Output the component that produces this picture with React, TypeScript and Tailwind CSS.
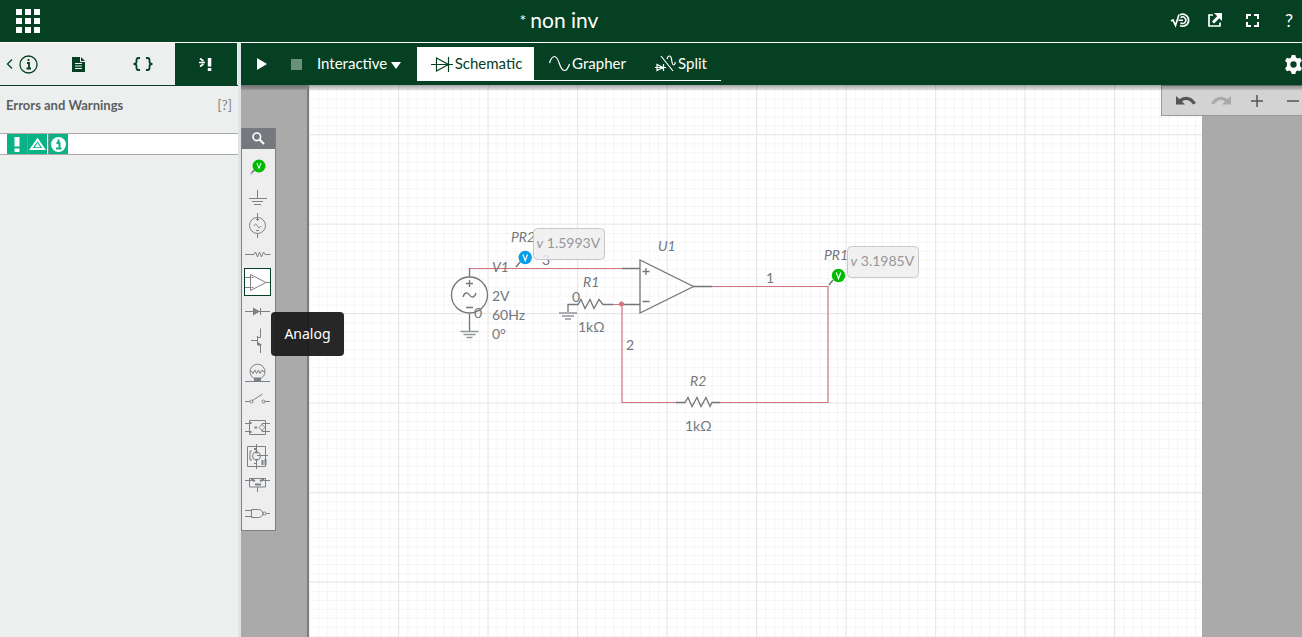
import React from "react";
import type { ReactNode } from "react";

const INK = "#73777c";
const WIRE = "#d4737f";

function Stroke({ children }: { children: ReactNode }) {
  return (
    <svg width="27" height="29" viewBox="0 0 27 29" fill="none" stroke="#7b8186">
      {children}
    </svg>
  );
}

const parts: { name: string; icon: ReactNode }[] = [
  {
    name: "Probes",
    icon: (
      <>
        <path d="M6 23 8 19l3-2 1 1z" fill="#7b8186" stroke="none" />
        <circle cx="15" cy="14" r="6.5" fill="#0b0" stroke="none" />
        <path d="M13 11l2 5.5 2-5.5" stroke="#fff" />
      </>
    ),
  },
  { name: "Schematic connectors", icon: <path d="M13.5 9v8M5 17.5h18M8 20.5h11M10 23.5h7" /> },
  {
    name: "Sources",
    icon: (
      <>
        <circle cx="13.5" cy="15.5" r="8" />
        <path d="M13.5 3v8M12 9.5h3M13.5 23.5V28M12 20.5h3M10 16c1-2.500 2.500-2.500 3.500 0s2.500 2 3.500 0" />
      </>
    ),
  },
  { name: "Passive", icon: <path d="M1 15.5h9l1.500-2.500 2 5 2-5 2 5 2-5 1.500 2.500h5.500" /> },
  { name: "Analog", icon: <path d="M6.500 6.500v16l15.500-8zM0 9.500h6.500M0 19.500h6.500M22 14.500h4M7.500 9.500h2M7.500 19.500h2" /> },
  {
    name: "Diodes",
    icon: (
      <>
        <path d="M1 14.500h25M16.500 11v7" />
        <path d="M9 10.500v8l7-4z" fill="#7b8186" stroke="none" />
      </>
    ),
  },
  {
    name: "Transistors",
    icon: (
      <>
        <path d="M7 14.500h6M13.500 10v9M13.500 11.500h3v-9M13.500 17.500l3 1.500v8" />
        <path d="M14 16l4 3-4 1z" fill="#7b8186" stroke="none" />
      </>
    ),
  },
  {
    name: "Indicators",
    icon: (
      <>
        <path d="M1 26.500h25M9.500 23a7.500 7.500 0 1 1 8 0zM6 16.500h2l1 2 2-3.500 1.500 3.500 2-3.500 1.500 3.500 2-3.500 1 1.500h2" />
        <path d="M10 23h7v3h-7z" fill="#7b8186" stroke="none" />
      </>
    ),
  },
  {
    name: "Switches",
    icon: (
      <>
        <circle cx="7.500" cy="17.500" r="1.500" />
        <circle cx="19.500" cy="17.500" r="1.500" />
        <path d="M1 17.500h5M21 17.500h5M8.500 16.500l10-6.500" />
      </>
    ),
  },
  {
    name: "Modeling blocks",
    icon: (
      <>
        <path d="M5.500 7.500h16v14h-16zM1 10.500h6M1 18.500h6M26 10.500h-8v1.500M26 18.500h-8v-1.500M18 11.500l3 3-3 3-3-3z" />
        <path d="M10.500 14.500h2.500M6.500 9v2M6.500 18v2" strokeWidth="2" />
      </>
    ),
  },
  {
    name: "Electromechanical",
    icon: (
      <>
        <path d="M3.500 4.500h18v20h-18zM12.500 2v8M12.500 18v9M13 13.500h11M8 9H6v9h2" />
        <circle cx="12.500" cy="14" r="4" />
        <path d="M11 6v2M11 21v1M18.500 18v5M21.500 17v6M12.500 8.500v3M12.500 17v2" strokeWidth="2" />
      </>
    ),
  },
  {
    name: "Connectors",
    icon: (
      <>
        <path d="M5.500 7.500h16v8.500h-16zM1 9.500h6M20 9.500h6M13.500 16v5" />
        <path d="M7 8.500l4 1.500M16 10l4-1.500M11 13.500h6" strokeWidth="2" />
      </>
    ),
  },
  {
    name: "Digital",
    icon: (
      <>
        <path d="M7.500 9.500h7a4.500 4 0 0 1 0 8h-7zM1 10.500h6.500M1 16.500h6.500M22 13.500h4" />
        <circle cx="20.500" cy="13.500" r="1.500" />
      </>
    ),
  },
];

function Header() {
  return (
    <header className="flex h-[43px] shrink-0 items-center border-b border-white bg-[#054023] text-white">
      <button aria-label="Apps" className="ml-4 w-6">
        <svg width="24" height="24" viewBox="0 0 24 24" fill="#fff">
          {[0, 9, 18].map((y) => [0, 9, 18].map((x) => <rect key={`${x}-${y}`} x={x} y={y} width="6" height="6" />))}
        </svg>
      </button>
      <h1 className="flex flex-1 justify-center gap-1 pb-0.5 pr-[92px] text-[21px] leading-6">
        <span className="text-base leading-6">*</span>non inv
      </h1>
      <nav className="flex items-center pb-0.5">
        <button aria-label="Multisim Live" className="mr-4">
          <svg width="22" height="18" viewBox="0 0 22 18" fill="none" stroke="#fff" strokeWidth="1.700">
            <path d="M1 10l2-1 2.500 5.500L9 3.500M10 3.800a6 6 0 1 1 0 10.800" />
            <path d="M10.500 6.800a3.200 3.200 0 1 1 0 4.800M8.500 9.200h4.500" strokeWidth="1.500" />
          </svg>
        </button>
        <button aria-label="Open in new window" className="mr-6">
          <svg width="14" height="14" viewBox="0 0 14 14" fill="none" stroke="#fff" strokeWidth="1.700">
            <path d="M5 2H1v11h11V9.500" />
            <path d="M5 9.500l6-6" strokeWidth="3" />
            <path d="M6 0h8v8z" fill="#fff" stroke="none" />
          </svg>
        </button>
        <button aria-label="Full screen" className="mr-6">
          <svg width="13" height="13" viewBox="0 0 13 13" fill="none" stroke="#fff" strokeWidth="2">
            <path d="M1 5V1h4M8 1h4v4M12 8v4H8M5 12H1V8" />
          </svg>
        </button>
        <button aria-label="Help" className="mr-[7px] w-3 text-lg leading-6">?</button>
      </nav>
    </header>
  );
}

function SidePanel() {
  return (
    <aside className="w-[241px] shrink-0 border-r-[3px] border-[#dde3e7] bg-[#edefef]">
      <div className="flex h-[43px] border-b border-[#054023] text-[#054023]">
        <button aria-label="Information" className="flex w-[43px] items-center gap-1.5 pl-1.5">
          <svg width="7" height="12" viewBox="0 0 7 12" fill="none" stroke="currentColor" strokeWidth="1.300"><path d="M6 1.500L1.500 6 6 10.500" /></svg>
          <svg className="shrink-0" width="19" height="19" viewBox="0 0 19 19" fill="none" stroke="currentColor">
            <circle cx="9.500" cy="9.500" r="8.500" strokeWidth="1.300" />
            <path d="M8 8h2v5.500M7.500 13.500h4.500M9.500 4v2" strokeWidth="1.800" />
          </svg>
        </button>
        <button aria-label="Document" className="flex w-[71px] items-center justify-center">
          <svg width="13" height="15" viewBox="0 0 13 15" fill="currentColor">
            <path d="M0 0h8v5h5v10H0zM9 0l4 4H9z" />
            <path d="M3 6.500h7M3 9h7M3 11.500h7" stroke="#edefef" />
          </svg>
        </button>
        <button aria-label="Code" className="flex w-[61px] items-center justify-center pr-1">
          <svg width="20" height="14" viewBox="0 0 20 14" fill="none" stroke="currentColor" strokeWidth="1.800">
            <path d="M7 1H5.500Q3.500 1 3.500 3v2Q3.500 7 0.500 7q3 0 3 2v2q0 2 2 2H7M13 1h1.500q2 0 2 2v2q0 2 3 2-3 0-3 2v2q0 2-2 2H13" />
          </svg>
        </button>
        <button aria-label="Errors and warnings" className="flex w-[62px] items-center justify-center bg-[#054023] text-white">
          <svg width="14" height="13" viewBox="0 0 14 13" fill="none" stroke="currentColor" strokeWidth="1.700">
            <path d="M1 0.500L4.500 3M1 8.500L4.500 6M0 4.500h6" />
            <path d="M8.800 0h3.500v8.500H8.800zM8.800 10h3.500v3H8.800z" fill="currentColor" stroke="none" />
          </svg>
        </button>
      </div>
      <div className="flex h-[47px] items-start justify-between px-1.5 pt-[9px] text-[#5b5f62]">
        <h2 className="text-[13px] font-bold leading-5">Errors and Warnings</h2>
        <button aria-label="Help on errors" className="text-sm leading-5 text-[#85898c]">[?]</button>
      </div>
      <div className="flex h-[22px] gap-px border-y border-[#aaa] bg-white pl-[7px] text-white">
        <div className="flex">
          <button aria-label="Errors" className="flex w-5 items-center justify-center bg-[#08b285]">
            <svg width="6" height="15" viewBox="0 0 6 15" fill="#fff"><path d="M0.500 0h5v9.500h-5zM0.500 11.500h5V15h-5z" /></svg>
          </button>
          <button aria-label="Warnings" className="flex w-5 items-center justify-center border-l border-[#6c9f8f] bg-[#08b285]">
            <svg width="17" height="14" viewBox="0 0 17 14" fill="none" stroke="#fff" strokeWidth="2">
              <path d="M8.500 2.500L2 12h13z" />
              <path d="M8.500 7L7 9.500h3z" strokeWidth="1.300" />
            </svg>
          </button>
        </div>
        <button aria-label="Messages" className="flex w-5 items-center justify-center border-l border-[#6c9f8f] bg-[#08b285]">
          <svg width="15" height="15" viewBox="0 0 15 15">
            <circle cx="7.500" cy="7.500" r="7.500" fill="#fff" />
            <path d="M5.500 6h3v5.500M5 11.500h5.500M7.500 2.500V5" fill="none" stroke="#08b285" strokeWidth="2" />
          </svg>
        </button>
      </div>
    </aside>
  );
}

function Toolbar() {
  return (
    <div className="relative z-10 flex h-[42px] shrink-0 items-center bg-[#054023] text-[15px] leading-6 text-white">
      <button aria-label="Run" className="ml-4 w-[10px]">
        <svg width="10" height="12" viewBox="0 0 10 12"><path d="M0 0l10 6-10 6z" fill="#fff" /></svg>
      </button>
      <button aria-label="Stop" className="ml-6 h-[11px] w-[11px] bg-[#69907b]" />
      <div className="relative ml-[15px] flex w-[84px] items-center pb-0.5">
        <select aria-label="Simulation type" className="h-7 w-full appearance-none bg-transparent leading-7 outline-none">
          <option>Interactive</option>
        </select>
        <svg className="pointer-events-none absolute right-0 mt-1" width="10" height="7" viewBox="0 0 10 7"><path d="M0 0h10L5 7z" fill="#fff" /></svg>
      </div>
      <div className="ml-4 mt-1 flex h-[34px] self-start">
        <button className="flex w-[117px] items-center justify-center gap-0.5 bg-white pl-0.5 text-[#054023]">
          <svg width="22" height="17" viewBox="0 0 22 17" fill="none" stroke="currentColor" strokeWidth="1.200">
            <path d="M0 8.500h22M5.500 2v13l12-6.500zM17.500 1v15" />
          </svg>
          <span className="pb-0.5">Schematic</span>
        </button>
        <button className="flex w-[107px] items-center justify-center gap-0.5 border-b border-white">
          <svg width="21" height="17" viewBox="0 0 21 17" fill="none" stroke="#fff" strokeWidth="1.200">
            <path d="M0.500 8C2 3 4 1.500 5.500 1.500c5 0 4.500 14 10 14 2 0 3.500-2 5-6.500" />
          </svg>
          <span className="pb-0.5">Grapher</span>
        </button>
        <button className="flex w-20 items-center gap-0.5 border-b border-white pl-3.5">
          <svg width="21" height="17" viewBox="0 0 21 17" fill="none" stroke="#fff" strokeWidth="1.200">
            <path d="M6 1l12 15M0 12.500h11M2 9.500v6l6-3zM8.500 9v7M12 4c1-4 4-4 4.500 0s1 6 2 6 1.500-1 2-3" />
          </svg>
          <span className="pb-0.5">Split</span>
        </button>
      </div>
      <button aria-label="Settings" className="-mr-px ml-auto">
        <svg width="19" height="19" viewBox="0 0 24 24" fill="#fff">
          <path fillRule="evenodd" d="M9.700 0h4.600l.8 3.300 2 1.100 3.200-1 2.400 4-2.400 2.400v4.400l2.400 2.400-2.400 4-3.200-1-2 1.100-.8 3.300H9.700l-.8-3.300-2-1.100-3.200 1-2.400-4 2.400-2.400V9.800L1.300 7.400l2.400-4 3.200 1 2-1.100zM12 8a4 4 0 1 0 0 8 4 4 0 0 0 0-8z" />
        </svg>
      </button>
    </div>
  );
}

function Palette() {
  return (
    <div className="w-[35px] border border-t-0 border-[#7b8186] bg-[#eee]">
      <button aria-label="Search components" className="flex h-[21px] w-full items-center justify-center bg-[#75797e]">
        <svg width="13" height="13" viewBox="0 0 13 13" fill="none" stroke="#fff" strokeWidth="1.600">
          <circle cx="4.800" cy="4.800" r="3.800" />
          <path d="M7.500 7.500l4.500 4.500" strokeWidth="2" />
        </svg>
      </button>
      <ul className="px-0.5 pb-px pt-[3px]">
        {parts.map((part) => (
          <li key={part.name} className="relative h-[29px] w-[27px]">
            <button
              aria-label={part.name}
              className={
                part.name === "Analog"
                  ? "h-7 w-[27px] overflow-hidden bg-white outline -outline-offset-1 outline-[#054023]"
                  : "h-[29px] w-[27px]"
              }
            >
              <Stroke>{part.icon}</Stroke>
            </button>
            {part.name === "Analog" && (
              <div role="tooltip" className="absolute left-[27px] top-11 z-20 flex h-11 w-[73px] items-center justify-center rounded bg-[#1b1b1b]/95 font-['Noto_Sans',sans-serif] text-sm text-white">
                Analog
              </div>
            )}
          </li>
        ))}
      </ul>
    </div>
  );
}

function Ground({ x, y }: { x: number; y: number }) {
  return <path d={`M${x - 9} ${y}h18M${x - 6} ${y + 3}h12M${x - 3} ${y + 6}h6`} stroke="#94979a" strokeWidth="1.500" fill="none" />;
}

function Probe({ x, y, tip, color }: { x: number; y: number; tip: string; color: string }) {
  return (
    <g>
      <path d={tip} stroke={INK} strokeWidth="1.500" fill="none" />
      <circle cx={x} cy={y} r="6.700" fill={color} />
      <path d={`M${x - 2.3} ${y - 3}l2.300 6 2.300-6`} stroke="#fff" strokeWidth="1.200" fill="none" />
    </g>
  );
}

function Readout({ x, y, value }: { x: number; y: number; value: string }) {
  return (
    <g>
      <rect x={x} y={y} width="71" height="31" rx="4" fill="#eee" fillOpacity="0.850" stroke="#c9c9c9" />
      <text x={x + 3} y={y + 19} fontSize="14" fill="#95979a">
        <tspan fontStyle="italic">v</tspan> {value}
      </text>
    </g>
  );
}

function Schematic() {
  return (
    <svg className="absolute inset-0 h-full w-full" role="img" aria-label="Non-inverting amplifier circuit">
      <defs>
        <pattern id="minor" width="8.950" height="8.950" patternUnits="userSpaceOnUse" x="0" y="-40">
          <path d="M0 0H9M0 0V9" stroke="#ececec" fill="none" />
        </pattern>
        <pattern id="major" width="89.500" height="89.500" patternUnits="userSpaceOnUse" x="-0.500" y="-40.500">
          <path d="M0 0.500H90M0.500 0V90" stroke="#e8e8e8" fill="none" />
        </pattern>
      </defs>
      <rect width="100%" height="100%" fill="url(#minor)" />
      <rect width="100%" height="100%" fill="url(#major)" />
      <g transform="translate(-309 -85)">
        <g fill="none" stroke={WIRE} strokeWidth="1.200">
          <path d="M469.500 268.500H622M613 304.500h9M622 304V402.500H676M720 402.500H828V286.500H712" />
        </g>
        <circle cx="621.500" cy="304" r="2.500" fill={WIRE} />
        <g fill="none" stroke={INK} strokeWidth="1.300">
          <path d="M469.500 268v9M469.500 313v18M622 268.500h18M624 304.500h16M693 286.500h19" />
          <circle cx="469.500" cy="295" r="18" />
          <path d="M466 283.500h7M469.500 280v7M466 307.500h7M463 297c1.500-5 4.500-5 6.500-2s5 3 6.500-2" />
          <path d="M640 260v53l53.500-26.500zM642.500 271.500h7M646 268v7M642.500 301.500h7" />
          <path d="M568 312v-7.500h10l3-5 4 9 5-9 4 9 5-9 4 5h10" />
          <path d="M676 402.500h9l3-5 4 9 5-9 4 9 5-9 4 9 2-4h8" />
        </g>
        <Ground x={469.5} y={331.5} />
        <Ground x={568} y={313} />
        <g fill={INK} fontSize="14">
          <g fontStyle="italic">
            <text x="511" y="242">PR2</text>
            <text x="492" y="272">V1</text>
            <text x="583" y="287">R1</text>
            <text x="658" y="251">U1</text>
            <text x="690" y="386">R2</text>
            <text x="824" y="260">PR1</text>
          </g>
          <text x="542" y="265">3</text>
          <text x="474" y="318">0</text>
          <text x="572" y="302">0</text>
          <text x="492" y="301">2V</text>
          <text x="492" y="320">60Hz</text>
          <text x="492" y="339">0°</text>
          <text x="578" y="332">1kΩ</text>
          <text x="685" y="431">1kΩ</text>
          <text x="626" y="350">2</text>
          <text x="766" y="283">1</text>
        </g>
        <Probe x={525.2} y={257.5} tip="M516 267l4-5" color="#069fe6" />
        <Probe x={838.5} y={275.5} tip="M829 285l4-5" color="#0b0" />
        <Readout x={533.5} y={228.5} value="1.5993V" />
        <Readout x={847.5} y={246.5} value="3.1985V" />
      </g>
    </svg>
  );
}

function ViewTools() {
  return (
    <div className="absolute right-0 top-0 flex h-[31px] w-[141px] items-center overflow-hidden border border-r-0 border-[#999] bg-[#d3d3d3] pl-[14px]">
      <button aria-label="Undo" className="mr-[15px] shrink-0">
        <svg width="20" height="12" viewBox="0 0 20 12" fill="#555"><path d="M0 1l3.500 3Q13-2 20 8l-3 1.500Q12 2.500 6 6.500L9 9.500H0z" /></svg>
      </button>
      <button aria-label="Redo" className="mr-5 shrink-0">
        <svg width="20" height="12" viewBox="0 0 20 12" fill="#aaa"><path d="M20 1l-3.500 3Q7-2 0 8l3 1.500Q8 2.500 14 6.500L11 9.500h9z" /></svg>
      </button>
      <button aria-label="Zoom in" className="mr-6 shrink-0">
        <svg width="12" height="12" viewBox="0 0 12 12" stroke="#555" strokeWidth="1.500"><path d="M6 0v12M0 6h12" /></svg>
      </button>
      <button aria-label="Zoom out" className="shrink-0">
        <svg width="12" height="12" viewBox="0 0 12 12" stroke="#555" strokeWidth="1.500"><path d="M0 6h12" /></svg>
      </button>
    </div>
  );
}

export default function App() {
  return (
    <div className="flex min-h-screen flex-col overflow-hidden font-[Lato,sans-serif]">
      <Header />
      <div className="flex grow">
        <SidePanel />
        <main className="flex min-w-0 grow flex-col">
          <Toolbar />
          <div className="relative flex grow bg-[#aaa]">
            <div className="z-10 w-[68px] shrink-0 border-r-2 border-[#7b7d80] pt-[43px]">
              <Palette />
            </div>
            <div className="relative min-w-0 grow bg-white">
              <Schematic />
            </div>
            <div className="w-[100px] shrink-0" />
            <ViewTools />
            <div className="pointer-events-none absolute inset-x-0 top-0 h-[5px] bg-linear-to-b from-black/35 to-black/10" />
          </div>
        </main>
      </div>
    </div>
  );
}
